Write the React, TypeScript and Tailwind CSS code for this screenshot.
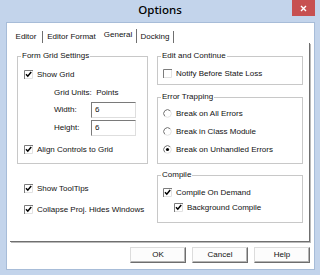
import type { ReactNode } from 'react';

const CheckBox = ({ checked }: { checked?: boolean }) => (
  <svg width="9" height="9" viewBox="0 0 9 9" className="shrink-0">
    <rect x="0" y="0" width="9" height="9" fill="#ffffff" />
    <path d="M8.5 0V8.5H0" stroke="#e2e2e2" fill="none" />
    <path d="M0.5 9V0.5H9" stroke="#7c7c7c" fill="none" />
    {checked && (
      <path d="M2 4.2l1.8 2 3.4-4.2" stroke="#000" strokeWidth="1.5" fill="none" />
    )}
  </svg>
);

const Radio = ({ checked }: { checked?: boolean }) => (
  <svg width="9" height="9" viewBox="0 0 9 9" className="shrink-0">
    <circle cx="4.5" cy="4.5" r="3.8" fill="#ffffff" stroke="#e4e4e4" />
    <path d="M1.8 7.2A3.8 3.8 0 0 1 7.2 1.8" stroke="#7c7c7c" fill="none" />
    {checked && <circle cx="4.5" cy="4.5" r="1.6" fill="#000" />}
  </svg>
);

const Group = (props: { title: string; className?: string; children: ReactNode }) => (
  <fieldset className={`border border-[#c8c8c8] ${props.className ?? ''}`}>
    <legend className="ml-[3px] px-[1px] leading-[10px]">{props.title}</legend>
    {props.children}
  </fieldset>
);

const Check = (props: { label: string; checked?: boolean; className?: string }) => (
  <div className={`flex items-center h-[13px] gap-[4px] ${props.className ?? ''}`}>
    <CheckBox checked={props.checked} />
    <span>{props.label}</span>
  </div>
);

const Option = (props: { label: string; checked?: boolean; className?: string }) => (
  <div className={`flex items-center h-[13px] gap-[4px] ${props.className ?? ''}`}>
    <Radio checked={props.checked} />
    <span>{props.label}</span>
  </div>
);

const Field = (props: { label: string; value: string; className?: string }) => (
  <div className={`flex items-center h-[16px] pl-[30px] ${props.className ?? ''}`}>
    <span className="w-[37px]">{props.label}</span>
    <div className="w-[45px] h-[16px] flex items-center pl-[3px] bg-white border border-t-[#7a7a7a] border-l-[#7a7a7a] border-r-[#dedede] border-b-[#dedede]">
      {props.value}
    </div>
  </div>
);

const Button = ({ label }: { label: string }) => (
  <button className="w-[56px] h-[16px] flex items-center justify-center bg-[#fcfcfc] border border-t-[#dcdcdc] border-l-[#dcdcdc] border-r-[#6e6e6e] border-b-[#6e6e6e] shadow-[inset_-1px_-1px_0_#b4b4b4]">
    {label}
  </button>
);

const tabs = [
  { label: 'Editor', w: 'w-[33px] border-r' },
  { label: 'Editor Format', w: 'w-[57px]' },
  { label: 'General', w: 'w-[37px] border-r', selected: true },
  { label: 'Docking', w: 'w-[37px] border-r' },
];

export default function App() {
  return (
    <div className="w-[320px] h-[275px] bg-[#c3d4eb] flex flex-col text-[8px] text-[#111] font-['Liberation_Sans',Arial,sans-serif]">
      {/* title bar */}
      <div className="relative h-[22px] flex items-center justify-center">
        <span className="text-[11.5px] font-['Noto_Sans',sans-serif] font-medium text-black -mt-[2px]">Options</span>
        <div className="absolute right-[5px] top-0 w-[23px] h-[16px] bg-[#c75050] flex items-center justify-center">
          <svg width="7" height="7" viewBox="0 0 7 7">
            <path d="M1 1l5 5M6 1l-5 5" stroke="#fff" strokeWidth="1.4" />
          </svg>
        </div>
      </div>

      {/* client area */}
      <div className="ml-[6px] mr-[5px] h-[248px] bg-white border border-[#a7bcd8] flex flex-col">
        <div className="ml-[3px] pt-[6px] h-[20px] flex items-end">
          {tabs.map((t) => (
            <div
              key={t.label}
              className={`${t.w} border-[#6f6f6f] flex items-center justify-center ${
                t.selected ? 'h-[14px] pb-[2px]' : 'h-[12px]'
              }`}
            >
              {t.label}
            </div>
          ))}
        </div>

        <div className="ml-[3px] w-[300px] h-[199px] flex gap-[9px] pl-[7px] pt-[8px] border-r border-b border-[#6f6f6f] shadow-[1px_1px_0_#b9b9b9]">
          <div className="w-[131px] flex flex-col">
            <Group title="Form Grid Settings">
              <div className="flex flex-col pl-[6px] pt-[7px] pb-[7px]">
                <Check label="Show Grid" checked />
                <div className="h-[13px] mt-[5px] pl-[30px] flex items-center">Grid Units:&nbsp; Points</div>
                <Field label="Width:" value="6" className="mt-[3px]" />
                <Field label="Height:" value="6" className="mt-[2px]" />
                <Check label="Align Controls to Grid" checked className="mt-[7px]" />
              </div>
            </Group>
            <Check label="Show ToolTips" checked className="mt-[18px] ml-[7px]" />
            <Check label="Collapse Proj. Hides Windows" checked className="mt-[8px] ml-[7px]" />
          </div>

          <div className="w-[146px] flex flex-col">
            <Group title="Edit and Continue">
              <div className="pl-[5px] pt-[6px] pb-[4px]">
                <Check label="Notify Before State Loss" />
              </div>
            </Group>
            <Group title="Error Trapping" className="mt-[7px]">
              <div className="flex flex-col pl-[5px] pt-[5px] pb-[7px]">
                <Option label="Break on All Errors" />
                <Option label="Break in Class Module" className="mt-[5px]" />
                <Option label="Break on Unhandled Errors" checked className="mt-[5px]" />
              </div>
            </Group>
            <Group title="Compile" className="mt-[6px]">
              <div className="flex flex-col pl-[5px] pt-[6px] pb-[8px]">
                <Check label="Compile On Demand" checked />
                <Check label="Background Compile" checked className="mt-[2px] ml-[11px]" />
              </div>
            </Group>
          </div>
        </div>

        <div className="flex justify-end gap-[6px] pr-[4px] mt-[5px]">
          <Button label="OK" />
          <Button label="Cancel" />
          <Button label="Help" />
        </div>
      </div>
    </div>
  );
}
